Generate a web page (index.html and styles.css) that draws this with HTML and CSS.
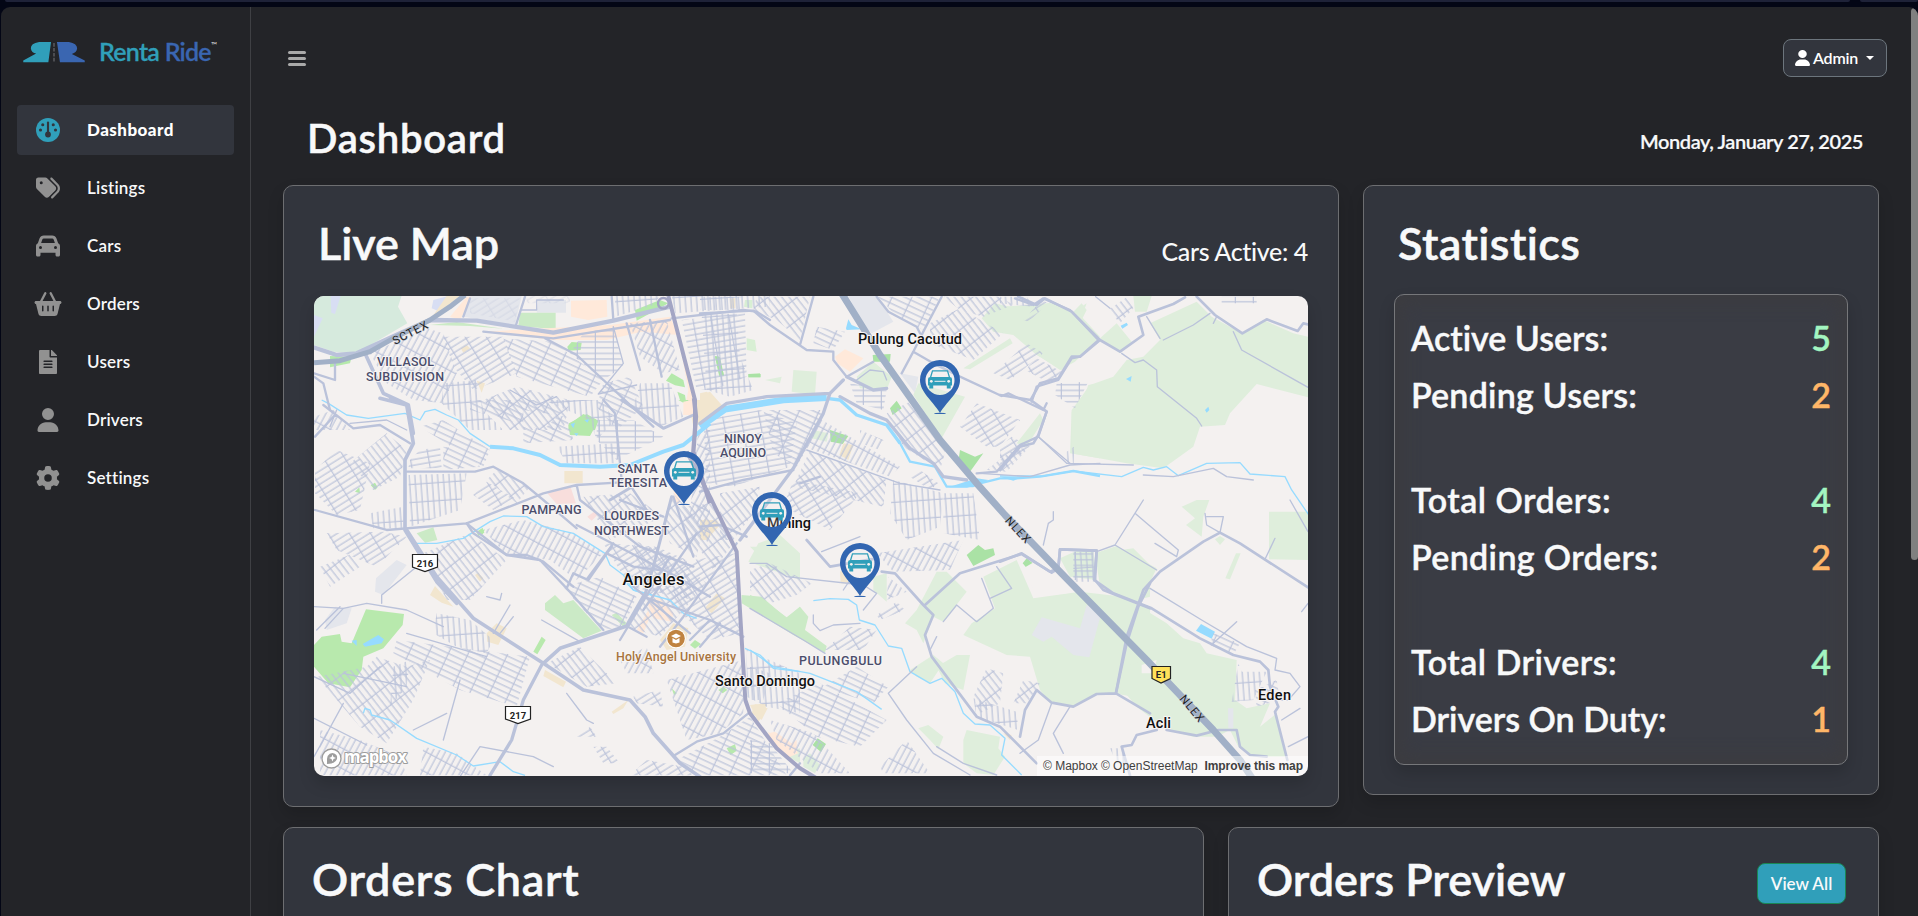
FILE: index.html
```html
<!DOCTYPE html>
<html lang="en">
<head>
<meta charset="utf-8">
<title>Renta Ride – Dashboard</title>
<link rel="stylesheet" href="styles.css">
</head>
<body>
<div class="browser-strip"><span class="strip-main"></span><span class="strip-side"></span></div>
<div class="app">
  <aside class="sidebar">
    <div class="brand">
      <svg class="brand-mark" viewBox="0 0 186 62"><path fill="#309fba" d="M84 0H48Q22 4 23 20Q25 33 39 35L0 56V61H76Z"/><path fill="#3a66b1" d="M102 0H138Q163 4 163 20Q161 33 147 36L186 56V61H111Z"/><path stroke="#55565a" stroke-width="5" stroke-dasharray="11 4" d="M93 3V60"/></svg>
      <div class="brand-name"><span class="renta">Renta</span> <span class="ride">Ride</span></div><span class="tm">™</span>
    </div>
    <nav class="nav">
      <a class="nav-item active"><svg class="ico" viewBox="0 0 512 512"><circle cx="256" cy="256" r="256"/><g fill="#32353d"><circle cx="256" cy="352" r="62"/><rect x="233" y="72" width="46" height="260" rx="23"/><circle cx="144" cy="144" r="33"/><circle cx="368" cy="144" r="33"/><circle cx="96" cy="256" r="33"/><circle cx="416" cy="256" r="33"/></g></svg><span>Dashboard</span></a>
      <a class="nav-item"><svg class="ico" viewBox="0 0 512 512"><path d="M345 39.1L472.8 168.4c52.4 53 52.4 138.2 0 191.2L360.8 472.9c-9.3 9.4-24.5 9.5-33.9 .2s-9.5-24.5-.2-33.9L438.6 325.9c33.9-34.3 33.9-89.4 0-123.7L310.9 72.9c-9.3-9.4-9.2-24.6 .2-33.9s24.6-9.2 33.9 .2zM0 229.5V80C0 53.5 21.5 32 48 32H197.5c17 0 33.3 6.7 45.3 18.7l168 168c25 25 25 65.5 0 90.5L277.3 442.7c-25 25-65.5 25-90.5 0l-168-168C6.7 262.7 0 246.5 0 229.5zM144 144a32 32 0 1 0 -64 0 32 32 0 1 0 64 0z"/></svg><span>Listings</span></a>
      <a class="nav-item"><svg class="ico" viewBox="0 0 512 512"><path d="M135.2 117.4L109.1 192H402.9l-26.1-74.6C372.3 104.6 360.2 96 346.6 96H165.4c-13.6 0-25.7 8.6-30.2 21.4zM39.6 196.8L74.8 96.3C88.3 57.8 124.6 32 165.4 32H346.6c40.8 0 77.1 25.8 90.6 64.3l35.2 100.5c23.2 9.6 39.6 32.5 39.6 59.2V400v48c0 17.7-14.3 32-32 32H448c-17.7 0-32-14.3-32-32V400H96v48c0 17.7-14.3 32-32 32H32c-17.7 0-32-14.3-32-32V400 256c0-26.7 16.4-49.6 39.6-59.2zM128 288a32 32 0 1 0 -64 0 32 32 0 1 0 64 0zm288 32a32 32 0 1 0 0-64 32 32 0 1 0 0 64z"/></svg><span>Cars</span></a>
      <a class="nav-item"><svg class="ico" viewBox="0 0 576 512"><path d="M253.3 35.1c6.1-11.8 1.5-26.3-10.2-32.4s-26.3-1.5-32.4 10.2L117.6 192H32c-17.7 0-32 14.3-32 32s14.3 32 32 32L83.9 463.5C91 492 116.6 512 146 512H430c29.4 0 55-20 62.1-48.5L544 256c17.7 0 32-14.3 32-32s-14.3-32-32-32H458.4L365.3 12.9C359.2 1.2 344.7-3.4 332.9 2.7s-16.3 20.6-10.2 32.4L404.3 192H171.7L253.3 35.1zM192 304v96c0 8.8-7.2 16-16 16s-16-7.2-16-16V304c0-8.8 7.2-16 16-16s16 7.2 16 16zm96-16c8.8 0 16 7.2 16 16v96c0 8.8-7.2 16-16 16s-16-7.2-16-16V304c0-8.8 7.2-16 16-16zm128 16v96c0 8.8-7.2 16-16 16s-16-7.2-16-16V304c0-8.8 7.2-16 16-16s16 7.2 16 16z"/></svg><span>Orders</span></a>
      <a class="nav-item"><svg class="ico" viewBox="0 0 384 512"><path d="M224 136V0H24C10.7 0 0 10.7 0 24v464c0 13.3 10.7 24 24 24h336c13.3 0 24-10.7 24-24V160H248c-13.2 0-24-10.8-24-24zm64 236c0 6.6-5.4 12-12 12H108c-6.6 0-12-5.4-12-12v-8c0-6.6 5.4-12 12-12h168c6.6 0 12 5.4 12 12v8zm0-64c0 6.6-5.4 12-12 12H108c-6.6 0-12-5.4-12-12v-8c0-6.6 5.4-12 12-12h168c6.6 0 12 5.4 12 12v8zm0-72v8c0 6.6-5.4 12-12 12H108c-6.6 0-12-5.4-12-12v-8c0-6.6 5.4-12 12-12h168c6.6 0 12 5.4 12 12zm96-114.1v6.1H256V0h6.1c6.4 0 12.5 2.5 17 7l97.9 98c4.5 4.5 7 10.6 7 16.9z"/></svg><span>Users</span></a>
      <a class="nav-item"><svg class="ico" viewBox="0 0 448 512"><path d="M224 256A128 128 0 1 0 224 0a128 128 0 1 0 0 256zm-45.7 48C79.8 304 0 383.8 0 482.3C0 498.7 13.3 512 29.7 512H418.3c16.4 0 29.7-13.3 29.7-29.7C448 383.8 368.2 304 269.7 304H178.3z"/></svg><span>Drivers</span></a>
      <a class="nav-item"><svg class="ico" viewBox="0 0 512 512"><path d="M495.9 166.6c3.2 8.7 .5 18.4-6.4 24.6l-43.3 39.4c1.1 8.3 1.7 16.8 1.7 25.4s-.6 17.1-1.7 25.4l43.3 39.4c6.9 6.2 9.6 15.9 6.4 24.6c-4.4 11.9-9.7 23.3-15.8 34.3l-4.7 8.1c-6.6 11-14 21.4-22.1 31.2c-5.9 7.2-15.7 9.6-24.5 6.8l-55.7-17.7c-13.4 10.3-28.2 18.9-44 25.4l-12.5 57.1c-2 9.1-9 16.3-18.2 17.8c-13.8 2.3-28 3.5-42.5 3.5s-28.7-1.2-42.5-3.5c-9.2-1.5-16.2-8.7-18.2-17.8l-12.5-57.1c-15.8-6.5-30.6-15.1-44-25.4L83.1 425.9c-8.8 2.8-18.6 .3-24.5-6.8c-8.1-9.8-15.5-20.2-22.1-31.2l-4.7-8.1c-6.1-11-11.4-22.4-15.8-34.3c-3.2-8.7-.5-18.4 6.4-24.6l43.3-39.4C64.6 273.1 64 264.6 64 256s.6-17.1 1.7-25.4L22.4 191.2c-6.9-6.2-9.6-15.9-6.4-24.6c4.4-11.9 9.7-23.3 15.8-34.3l4.7-8.1c6.6-11 14-21.4 22.1-31.2c5.9-7.2 15.7-9.6 24.5-6.8l55.7 17.7c13.4-10.3 28.2-18.9 44-25.4l12.5-57.1c2-9.1 9-16.3 18.2-17.8C227.3 1.2 241.5 0 256 0s28.7 1.2 42.5 3.5c9.2 1.5 16.2 8.7 18.2 17.8l12.5 57.1c15.8 6.5 30.6 15.1 44 25.4l55.7-17.7c8.8-2.8 18.6-.3 24.5 6.8c8.1 9.8 15.5 20.2 22.1 31.2l4.7 8.1c6.1 11 11.4 22.4 15.8 34.3zM256 336a80 80 0 1 0 0-160 80 80 0 1 0 0 160z"/></svg><span>Settings</span></a>
    </nav>
  </aside>

  <main class="main">
    <header class="topbar">
      <div class="burger"><i></i><i></i><i></i></div>
      <button class="admin"><svg class="admin-ico" viewBox="0 0 448 512" preserveAspectRatio="none"><path d="M224 256A128 128 0 1 0 224 0a128 128 0 1 0 0 256zm-45.7 48C79.8 304 0 383.8 0 482.3C0 498.7 13.3 512 29.7 512H418.3c16.4 0 29.7-13.3 29.7-29.7C448 383.8 368.2 304 269.7 304H178.3z"/></svg><span>Admin</span><i class="caret"></i></button>
    </header>
    <div class="heading"><h1>Dashboard</h1><div class="date">Monday, January 27, 2025</div></div>

    <div class="row">
      <section class="card map-card">
        <div class="card-head"><h2 class="t-map">Live Map</h2><span class="cars-active">Cars Active: 4</span></div>
        <div class="map">
<svg class="map-svg" viewBox="0 0 994 480">
<defs>
  <pattern id="g0" width="54" height="17" patternUnits="userSpaceOnUse"><path d="M0 8H54M4 0V17" stroke="#bcc3da" stroke-width="3.5" fill="none"/></pattern>
  <pattern id="g1" href="#g0" patternTransform="rotate(25)"/>
  <pattern id="g2" href="#g0" patternTransform="rotate(52)"/>
  <pattern id="g3" href="#g0" patternTransform="rotate(86)"/>
  <pattern id="g4" href="#g0" patternTransform="rotate(118)"/>
  <pattern id="g5" href="#g0" patternTransform="rotate(148)"/>
  <pattern id="g6" href="#g0" patternTransform="rotate(170)"/>
  <g id="pin"><ellipse cx="20" cy="53.4" rx="6" ry=".7" fill="#3266b1"/><circle cx="20" cy="20" r="15" fill="#f4f1f0" opacity=".2"/><path fill-rule="evenodd" fill="#3266b1" d="M20 0A20 20 0 0 1 40 20C40 32 28 40 20 53C12 40 0 32 0 20A20 20 0 0 1 20 0ZM20 6A14.5 14.5 0 1 0 20 35A14.5 14.5 0 1 0 20 6Z"/><path fill="none" stroke="#309fba" stroke-width="1.3" d="M10.5 17.5L12.5 10.8H27.5L29.500 17.500"/><path fill="#309fba" d="M8 19Q8 17 10.500 17H29.500Q32 17 32 19V25.500H30.700V28.500H26.800V25.500H13.200V28.500H9.300V25.500H8Z"/><path stroke="#f4f1f0" stroke-width="1" d="M14.500 21.300H25.500"/><circle cx="11.300" cy="21.300" r="1.400" fill="#f4f1f0"/><circle cx="28.700" cy="21.300" r="1.400" fill="#f4f1f0"/></g>
</defs>
<rect width="994" height="480" fill="#f4f1f0"/>

<!-- Land use -->
<g transform="translate(-44 -206) scale(.33333)">
  <path fill="#d6eadd" d="M132 617H395L384 650L412 700L260 790L190 785L132 765Z"/>
  <path fill="#d8def3" d="M182 618H212L195 672L184 668ZM132 675L158 685L132 740ZM490 630L535 618L530 650L510 665L485 655Z"/>
  <path fill="#f2e6cf" d="M530 618H570L480 690ZM1290 915L1320 905L1360 950L1290 990ZM572 775L590 765L600 775L580 788ZM620 872L645 880L635 908ZM1380 625H1396V655H1380Z"/>
  <path fill="#e4e6ec" d="M600 618H755L735 705L580 680ZM805 630H888V668H800Z"/>
  <path fill="#cbeac6" d="M750 668H857V718L745 708ZM480 705L560 696L700 716L600 708Z"/>
  <path fill="#ffe9da" d="M903 632L1010 630L1012 680L955 690L903 680ZM540 680L590 620H605L570 690ZM1020 705L1200 680L1225 735L1115 725L1010 750L850 750L640 725ZM1225 740L1270 900L1275 975H1240L1255 900Z"/>
  <path fill="#b5e9ab" d="M1095 660L1170 630L1195 640L1100 692ZM892 770L905 756L935 758L932 780L895 782ZM1335 800L1345 798L1362 855L1348 860ZM1188 872L1205 850L1240 870L1245 892L1215 886ZM1222 905L1245 915L1248 935L1230 930ZM180 798L245 800L240 820L180 832ZM1436 852L1470 850V862H1436ZM897 1000L950 972L985 992L975 1020H895Z"/>
  <path fill="#d8efd4" d="M1430 745L1455 750L1460 785L1430 780ZM1425 630H1447V655L1422 650Z"/>
</g>
<g transform="translate(386 -16) scale(.33333)">
  <path fill="#e4e6ec" d="M445 48H530L580 125L515 160L490 135ZM600 280L655 290L645 340Z"/>
  <path fill="#dfeedc" d="M845 115L885 70L945 85L1000 90L1060 70L1120 95L1145 70L1160 90L1130 150L1165 165L1085 270L1010 225L940 165L880 155ZM790 265L930 175L938 190L810 268ZM655 310L795 350L725 475L640 345ZM1165 315L1200 310V535L1110 520L1115 395L1140 380ZM470 290L520 245L575 290L560 330L480 325ZM280 270L350 275L345 345L275 335ZM195 300L245 290L240 310ZM340 450L385 460L380 485L335 475ZM950 490L1020 400L1030 420L980 500Z"/>
  <path fill="#aae2a5" d="M780 510L825 530L850 520L810 575L775 545ZM390 450L445 468L428 492L392 485ZM570 385L590 362L605 385L578 405ZM45 228L60 232L72 288L58 285ZM145 282H182V292H145ZM518 225L572 222L570 245L520 245Z"/>
  <path fill="#ffe9da" d="M405 230L435 208L490 235L450 275L412 250Z"/>
  <path fill="#f2e6cf" d="M0 340L20 335L70 380L5 425ZM430 490L460 495L445 540L418 525ZM0 720L50 720L60 735L20 780H0Z"/>
  <path fill="#96dbff" d="M438 145L445 118L455 135L485 148L440 150Z"/>
</g>
<g transform="translate(686 -116) scale(.33333)">
  <path fill="#dfeedc" d="M0 380L100 375L150 368L215 400L260 370L245 410L300 470L225 545L180 570L105 520L95 490L45 460L0 450ZM300 475L350 430L395 485L360 520ZM400 348H455L440 395H405ZM450 430L590 365L635 410L725 460L790 420L880 460L924 470V652L770 612L690 700L675 735L600 740L580 800L490 865L380 850L215 820L215 690L270 615L340 590L380 540L430 530L480 480Z"/>
  <path fill="#96dbff" d="M362 437L380 428L384 435L367 446ZM378 597L395 588L392 605ZM615 690L625 680L628 690L620 698Z"/>
</g>
<g transform="translate(-14 204) scale(.33333)">
  <path fill="#b8e9ad" d="M198 328L312 342L308 375L250 445L190 470L185 510L150 562L85 550L42 500V435L65 410L120 402L125 425L155 430ZM700 455L725 410L737 420L712 463ZM1170 435L1185 420L1203 432L1185 446ZM1280 745L1305 733L1310 752L1292 765ZM535 95L555 88L545 108ZM1115 565L1130 580L1122 585ZM1255 570L1270 560L1282 570L1268 580Z"/>
  <path fill="#cbeac6" d="M735 310L765 285L790 310L820 300L905 392L850 415L735 330ZM935 345L950 338L980 370L970 380ZM1325 285L1385 290L1460 355L1500 320V415L1325 310ZM350 100L400 82L412 120L375 128Z"/>
  <path fill="#dfeedc" d="M1375 130L1440 105L1500 160V240L1345 185ZM1440 760L1500 745V790Z"/>
  <path fill="#e4e6ec" d="M228 235L290 180L320 195L250 285L225 275ZM75 360L105 320L155 325L140 370L80 390Z"/>
  <path fill="#f2e6cf" d="M390 285L405 258L460 320L425 308ZM560 400L590 370L620 385L595 435L562 425ZM735 510L798 545L790 562L730 528ZM935 635L985 600L970 625L940 642ZM1195 85L1215 55L1245 85L1215 118ZM1215 325L1250 280L1275 295L1235 340ZM1080 420L1120 370L1165 385L1155 440L1100 450ZM1355 640L1365 612L1403 625L1385 660Z"/>
  <path fill="#ffe9da" d="M1040 305L1075 290L1120 340L1115 365L1060 355ZM1010 390L1045 330L1050 350L1030 400ZM1405 700L1425 695L1475 730L1490 720V760L1450 765Z"/>
  <path fill="#96dbff" d="M155 422L170 420L170 438ZM188 432L235 405L252 418L245 430L195 440Z"/>
</g>
<g transform="translate(436 244) scale(.33333)">
  <path fill="#cbeac6" d="M0 165L40 180L110 232L150 200L175 230L165 270L230 318L225 338L130 285L0 205Z"/>
  <path fill="#dfeedc" d="M640 285L665 250L735 205L700 110L800 60L850 175L990 155L1120 170L1200 200V500L1150 470L1090 460L1040 465L970 500L900 490L870 450L840 350L770 345ZM465 250L500 210L560 95L590 95L650 155L580 245L550 230L520 310L500 270ZM480 390L550 345L580 370L540 430L500 410ZM560 380L620 345L660 345L640 450L585 430ZM640 600L650 570L750 590L745 625L765 650L730 705L680 700L640 670ZM505 565L535 555L580 590L565 628L540 600ZM160 655L180 640L210 675L195 700L160 680ZM0 20L60 20L110 90L60 80ZM370 110L410 100L410 185L370 150ZM985 30H1030L1040 120L960 110L930 55ZM1045 40L1150 25L1200 75V170L1140 185L1050 145Z"/>
  <path fill="#e4e6ec" d="M845 285L875 232L990 265L1010 195L1055 215L1018 352L970 345L905 290L880 305Z"/>
  <path fill="#aae2a5" d="M650 45L685 15L705 30L730 25L735 45L670 78ZM818 70L830 55L855 75L835 90ZM188 615L203 595L228 612L213 636Z"/>
  <path fill="#f2e6cf" d="M270 95L290 85L300 130L272 130ZM0 495L50 490L45 515L25 545ZM760 580L785 585L780 600Z"/>
  <path fill="#ffe9da" d="M55 575L80 595L125 610L145 640L110 655L60 600Z"/>
</g>
<g transform="translate(686 204) scale(.33333)">
  <path fill="#dfeedc" d="M807 35H924V180L807 178ZM545 20L590 0H628L610 50L605 110L558 75L585 55ZM676 235L708 160L722 160L690 238ZM285 160L350 138L470 205L420 310L300 260ZM420 320L500 370L550 415L600 430L620 460L710 480L705 600L740 625L810 610L780 680L830 640L860 770L760 770L715 740L690 690L650 710H580L500 690L410 620L360 560L360 505L440 480L380 430ZM645 118L660 108L675 118L660 135Z"/>
  <path fill="#f4f1f0" d="M70 205L130 170L150 215L200 280L110 290ZM425 495L470 480L460 520L425 520Z"/>
  <path fill="#96dbff" d="M588 392L603 372L645 395L635 416Z"/>
  <path fill="#e4e6ec" d="M684 625H700V685H685Z"/>
</g>
<g transform="translate(-4 104) scale(.33333)">
  <path fill="#b5e9ab" d="M775 75L820 42L865 62L840 108L780 105ZM500 395L518 383L523 398L505 408ZM135 275L148 262L150 280ZM182 255L195 248L203 262L195 270ZM1105 0H1140L1120 8Z"/>
  <path fill="#96dbff" d="M782 72L795 68L790 85ZM823 60L838 58L832 68ZM792 100L805 100L800 108Z"/>
  <path fill="#f8dedc" d="M712 280L782 262L798 310L740 312ZM832 350L855 333L862 345L845 362Z"/>
  <path fill="#f2e6cf" d="M763 213H818V250H763ZM1135 0H1200V60L1150 80ZM495 525L505 518L520 535L510 545Z"/>
  <path fill="#ffe9da" d="M1120 5L1150 0V45H1120ZM1090 270L1120 280L1100 320Z"/>
</g>

<!-- Residential street grids -->
<g transform="translate(-44 -206) scale(.33333)">
  <path fill="url(#g4)" d="M300 790L470 715L520 730L560 850L520 940L430 930L350 880Z"/>
  <path fill="url(#g5)" d="M520 740L700 740L740 850L610 900L550 830Z"/>
  <path fill="url(#g1)" d="M700 745L850 755L1000 870L960 920L740 860Z"/>
  <path fill="url(#g3)" d="M520 880L620 870L640 960L700 1020H600L515 940Z"/>
  <path fill="url(#g2)" d="M640 930L740 890L900 930L880 1020H720Z"/>
  <path fill="url(#g0)" d="M940 730L1030 710L1060 830L1000 870L900 790Z"/>
  <path fill="url(#g1)" d="M1000 880L1080 860L1120 950L1040 1020L980 950Z"/>
  <path fill="url(#g4)" d="M1080 700L1190 690L1230 840L1180 850L1110 800Z"/>
  <path fill="url(#g3)" d="M1110 880L1200 880L1240 980L1170 1010L1090 950Z"/>
  <path fill="url(#g6)" d="M1235 690L1425 670L1430 860L1330 900L1280 900Z"/>
  <path fill="url(#g3)" d="M1205 618L1500 618V650L1430 655L1215 670ZM1035 618L1170 618L1150 645L1035 680Z"/>
  <path fill="url(#g4)" d="M132 980L190 960L240 1020H132Z"/>
  <path fill="url(#g5)" d="M770 618H900V640H770ZM600 625L750 625L735 695L600 670Z" opacity=".35"/>
</g>
<g transform="translate(386 -16) scale(.33333)">
  <path fill="url(#g3)" d="M0 50H130L120 90H0ZM5 105L110 100L120 230L160 330L90 350L20 330Z"/>
  <path fill="url(#g2)" d="M170 50H330L300 180L230 120L160 90Z"/>
  <path fill="url(#g1)" d="M350 140L435 155L400 210L340 190ZM535 50L720 50L670 150L590 110Z"/>
  <path fill="url(#g2)" d="M730 50L900 50L940 75L850 110L780 90ZM690 130L780 85L910 160L820 240L690 190Z"/>
  <path fill="url(#g5)" d="M880 280L980 190L1030 220L930 300ZM975 270L1010 235L1085 275L1050 310Z"/>
  <path fill="url(#g0)" d="M450 310L560 330L550 390L470 370ZM1070 310L1165 305L1125 385L1065 345Z"/>
  <path fill="url(#g2)" d="M560 400L640 360L740 500L720 570L610 500Z"/>
  <path fill="url(#g5)" d="M780 440L830 370L960 420L900 500L860 500Z"/>
  <path fill="url(#g6)" d="M10 420L180 390L290 430L270 560L100 620L20 610Z"/>
  <path fill="url(#g1)" d="M190 390L370 390L340 470L290 560L220 520Z"/>
  <path fill="url(#g4)" d="M350 410L600 560L570 590L310 500ZM480 450L550 480L540 510L480 490Z"/>
  <path fill="url(#g2)" d="M330 510L560 600L550 680L280 620Z"/>
  <path fill="url(#g3)" d="M580 600L730 640L720 740L620 780L570 700ZM730 640L820 640L840 780L730 760Z"/>
  <path fill="url(#g5)" d="M280 600L480 640L390 750L250 680ZM630 590L660 570L715 610L690 630Z"/>
  <path fill="url(#g2)" d="M860 570L950 500L980 510L920 575ZM60 640L180 620L160 700L100 780H60Z"/>
</g>
<g transform="translate(686 -116) scale(.33333)">
  <path fill="url(#g2)" d="M325 390L380 352L400 385L360 430Z"/><path fill="url(#g0)" d="M665 350H770V370H665Z"/>
  <path fill="url(#g5)" d="M70 420L125 360L145 370L85 425ZM35 770L90 800L0 880V800Z"/>
  <path fill="url(#g3)" d="M0 350L80 350L100 380L0 370ZM200 815L222 800V850H200Z"/>
</g>
<g transform="translate(-4 104) scale(.33333)">
  <path fill="url(#g5)" d="M15 210L80 150L180 190L150 330L80 345L15 280Z"/>
  <path fill="url(#g2)" d="M120 190L230 100L290 150L270 230L190 270Z"/>
  <path fill="url(#g3)" d="M295 225L470 220L450 330L300 380ZM180 340L280 320V385H190Z"/>
  <path fill="url(#g6)" d="M300 180L330 150L390 140L395 205H295Z"/>
  <path fill="url(#g1)" d="M400 140L470 150L510 200L400 210ZM330 80L400 60L540 150L520 200L440 150Z"/>
  <path fill="url(#g5)" d="M490 285L530 245L615 295L550 330Z"/><path fill="url(#g2)" d="M560 210L660 260L620 310L530 240Z"/>
  <path fill="url(#g5)" d="M50 400L220 395L290 410L200 500L80 450Z"/>
  <path fill="url(#g2)" d="M30 500L130 460L150 500L60 560Z"/>
  <path fill="url(#g2)" d="M340 460L480 400L590 480L480 600H410Z"/>
  <path fill="url(#g4)" d="M520 390L640 360L790 400L880 460L800 540L720 480L590 465Z"/>
  <path fill="url(#g1)" d="M480 30L700 90L760 30L690 0H480ZM640 30L770 50L790 120L640 130Z"/>
  <path fill="url(#g3)" d="M740 140L915 130L915 190L770 190ZM700 0L870 0L915 60L860 120L840 60Z"/>
  <path fill="url(#g0)" d="M860 60L970 60L1060 110L920 180L860 120Z"/>
  <path fill="url(#g2)" d="M1090 280L1180 380L1160 470L1080 430L1060 360ZM820 290L960 280L1060 350L900 420Z"/>
  <path fill="url(#g5)" d="M880 430L1040 440L1130 480L1150 600L960 560Z"/>
  <path fill="url(#g4)" d="M1165 90L1200 90V440L1140 340Z"/>
</g>
<g transform="translate(-14 204) scale(.33333)">
  <path fill="url(#g1)" d="M290 420L690 470L650 620L480 570L280 460Z"/>
  <path fill="url(#g2)" d="M50 530L200 500L230 470L320 500L390 480L340 600L260 730L180 680Z"/>
  <path fill="url(#g3)" d="M410 340L510 360L580 420L560 460L470 440L400 400ZM280 500L330 480L320 560L270 620Z"/>
  <path fill="url(#g4)" d="M60 690L180 720L300 770L320 826H60ZM370 740L470 760L560 826H360Z"/>
  <path fill="url(#g2)" d="M740 490L840 440L950 550L860 560Z"/>
  <path fill="url(#g5)" d="M1000 590L1080 570L1090 620L1010 610ZM830 710L870 680L890 710ZM880 740L920 740L960 790H910ZM990 826L1040 780L1150 800L1180 826Z"/>
  <path fill="url(#g1)" d="M790 260L900 230L1010 290L970 380L910 390L850 330Z"/>
  <path fill="url(#g2)" d="M1000 120L1140 180L1220 250L1080 410L980 380L1030 290Z"/>
  <path fill="url(#g5)" d="M1180 180L1310 160L1325 400L1230 420L1100 300Z"/>
  <path fill="url(#g4)" d="M960 480L1040 440L1060 520L980 520ZM1100 540L1330 480L1330 640L1260 700L1160 720Z"/>
  <path fill="url(#g1)" d="M1130 780L1260 710L1350 650L1460 826H1200Z"/>
  <path fill="url(#g3)" d="M1340 450L1500 520V640L1400 620L1340 590Z"/>
  <path fill="url(#g2)" d="M1140 20L1240 10L1300 130L1240 210L1180 120Z"/>
</g>
<g transform="translate(436 244) scale(.33333)">
  <path fill="url(#g2)" d="M0 90L60 70L185 130L140 165L60 190L0 150Z"/>
  <path fill="url(#g4)" d="M380 40L640 0L600 90L430 95ZM415 110L470 155L410 180Z"/>
  <path fill="url(#g5)" d="M380 225L440 185L465 210L390 240ZM225 330L300 260L380 270L340 330Z"/>
  <path fill="url(#g1)" d="M220 440L320 380L415 440L370 490L240 450ZM80 490L210 430L410 540L330 620L200 590Z"/>
  <path fill="url(#g4)" d="M60 540L190 580L300 700H210L80 600ZM390 680L470 600L540 700H400Z"/>
  <path fill="url(#g2)" d="M670 470L710 385L760 400L750 490L690 520ZM790 490L820 420L870 430L830 490Z"/>
  <path fill="url(#g3)" d="M670 475L800 515L805 570L680 530ZM0 380L60 400L40 480L0 480Z"/>
  <path fill="url(#g0)" d="M970 35H1030V120H970ZM0 600L60 610L130 700H0Z"/>
</g>
<g transform="translate(686 204) scale(.33333)">
  <path fill="url(#g3)" d="M220 155H285V245H220ZM330 745H365L385 790H350ZM725 515L800 515L760 600L695 605L715 490Z"/>
  <path fill="url(#g1)" d="M765 570L830 540L840 600L770 620ZM640 400L720 430L700 465L630 435Z"/>
</g>

<!-- Water -->
<g fill="none" stroke="#96dbff" stroke-linejoin="round">
<g transform="translate(-4 104) scale(.33333)"><path stroke-width="4" d="M35 0L55 10L110 45L175 55L285 40L330 60L345 35L375 28L410 45L445 60L480 100L540 140"/><path stroke-width="12" d="M540 140L610 145L690 165L750 195L870 200L960 195L1060 155L1120 135L1200 70"/><path stroke-width="4" d="M310 430H380L460 415L540 365L580 348L650 350L700 380L790 400L885 460L900 495L940 525L970 570L1000 580"/></g>
<g transform="translate(386 -16) scale(.33333)"><path stroke-width="20" d="M0 440L75 388L250 360L380 353"/><path stroke-width="10" d="M380 355L420 360L470 405L560 435L600 490"/><path stroke-width="7" d="M595 480L630 545L705 560L740 620L800 620L900 595L950 595L1020 590L1120 573L1200 588"/><path fill="#96dbff" stroke="none" d="M745 622L830 595L865 600L820 622ZM900 590L965 592L940 602Z"/></g>
<g transform="translate(686 -116) scale(.33333)"><path stroke-width="4" d="M0 888H130L220 873L365 890L430 862L460 870L500 860L535 887L620 850L720 848L750 882L855 890L875 930L930 1010"/></g>
<g transform="translate(-14 204) scale(.33333)"><path stroke-width="4" d="M980 250L1000 270L1110 300L1150 340L1190 355M1335 445L1380 465L1420 505L1500 515M190 640L195 625L210 630L215 645L270 660L350 715L470 765L520 798L600 785L640 815L675 826"/></g>
<g transform="translate(436 244) scale(.33333)"><path stroke-width="4" d="M190 182L240 176L295 178L320 195L328 240L375 255L415 318L455 325L480 395L540 430L575 415L615 455L640 520L675 552L720 555L765 595L755 645L815 705M0 330L70 380L180 400L320 455L395 508"/></g>
</g>

<!-- Secondary roads -->
<g fill="none" stroke="#bac2da" stroke-linejoin="round" stroke-linecap="round">
<g transform="translate(-44 -206) scale(.33333)"><path stroke-width="13" d="M125 770L200 795L260 790L390 730L480 690L620 692L850 728L1030 692L1200 650"/><path stroke-width="7" d="M640 725L850 745L1200 690M765 620L738 705M825 745L920 795L1150 1010M1025 618L1030 690M1140 690L1175 860M1070 700L1110 840M1205 685L1420 660L1460 665L1500 690M600 625L580 680M132 860L160 880L180 960M132 850L195 870V820"/><path stroke-width="11" d="M285 790L340 910L415 945L430 1030"/><path stroke-width="4" d="M800 630H880M755 660H800V630M200 960L180 1010M240 1000L350 990L410 1020M720 900L800 945L860 920M985 912L1060 820L1030 710M1100 885L985 912"/></g>
<g transform="translate(386 -16) scale(.33333)"><path stroke-width="7" d="M0 100L160 92L210 135L320 210L400 215M340 50L300 195M400 215V240L440 290L520 245M530 50L565 95L650 140L660 160M725 50L670 155L640 215L605 280M640 215L700 250L780 290L905 348L925 340L1030 390L1040 370M945 55L1000 75L1030 55L1110 90L1195 180L1140 230L1115 235L1075 300L1010 320L995 365M1040 395L1015 470L960 495L890 575L830 580"/><path stroke-width="10" d="M0 430L80 370L200 350L390 340L430 300M440 290L520 330L560 325M420 350L510 400L560 420L630 505L700 550L730 590L800 600M390 340L370 400L280 565L120 780"/><path stroke-width="7" d="M280 570L130 600L0 635M300 610L360 590M0 740L60 735L140 770"/><path stroke-width="4" d="M320 510L600 610L720 630M840 580L990 590L1110 555L1200 550M1015 470L1110 550M470 300L510 270L550 275L560 300"/></g>
<g transform="translate(686 -116) scale(.33333)"><path stroke-width="8" d="M55 350L110 375L135 355L215 395L300 480L360 515L430 465L415 410L520 372L555 352M590 350L645 405L727 460L800 418L893 453L910 430L924 433M300 480L240 530L215 530L175 595L120 610L92 660L0 645M92 660L140 695L115 765L100 790L60 800L0 870"/><path stroke-width="4" d="M287 350L330 385M365 520L405 548L430 540L470 570L472 620L590 715L605 738M440 410L480 475M700 455L725 510L924 622M115 770L200 850L400 855M430 885L520 890L640 865L680 890L760 900M490 480L580 435L630 400M650 410L640 430"/></g>
<g transform="translate(-4 104) scale(.33333)"><path stroke-width="11" d="M210 -5L290 15L310 130L285 180V390L380 545L440 610"/><path stroke-width="7" d="M15 330L230 390L470 370L700 280L800 255L920 248M290 215H495L550 200L640 250L700 300L800 385M240 -5L285 10M40 15L130 85L210 75L300 130M15 110L75 45M880 0L915 40L935 240M470 370L490 400L590 465H650L700 485L790 560M800 255L810 300L990 440L1150 500M1090 290L1150 470M905 440L835 540M930 300L1060 350M960 255L1010 330M800 375L1100 530L1200 590"/><path stroke-width="9" d="M1085 290L1030 500L1000 600M935 0L1060 85L1150 45M1000 240L900 300"/></g>
<g transform="translate(-14 204) scale(.33333)"><path stroke-width="11" d="M320 90L410 230L520 355L730 490L850 570L990 600L1035 650L1060 700L1140 790L1200 830M730 490L780 445L980 378L1030 290"/><path stroke-width="10" d="M725 495L670 600L635 720L570 826"/><path stroke-width="7" d="M500 70L620 165L720 180L800 265L910 390M800 265L820 220L860 238L940 130M1030 290L1230 360L1330 410M980 378L1040 410M1000 260L1170 400M1110 170L960 420M1190 100L1030 330M1310 130L1150 350L1080 440M1230 360L1170 420M1260 370L1200 440M920 160L1000 200L1080 210M1125 765L1190 725L1270 700L1345 640M1470 826L1500 790"/><path stroke-width="4" d="M42 320L130 325L200 310L320 330L430 380M245 310V285L350 200M75 385L130 325M42 530L150 580L240 500M42 655L200 735M320 400L560 470M480 540L430 720M320 560L130 520M42 770L70 720L130 610M440 640L340 690M50 390L120 320M480 830L540 740L700 770L760 800M800 580L860 660L880 670M640 350L600 400M725 360L840 425M580 400L630 315M560 290L600 300L605 280"/></g>
<g transform="translate(436 244) scale(.33333)"><path stroke-width="8" d="M170 0L240 80L380 55M395 95L435 100L520 195L550 225L525 285L545 350L680 530L750 560L860 670M525 195L630 100L815 42L905 98L925 85L930 28L1040 32L1035 120L1060 150L1200 205M1200 130L1165 200L1130 310L1098 460L1040 462L970 500L905 488L860 450L825 510L810 590M1098 460L1200 520"/><path stroke-width="4" d="M0 70H50L110 110L340 135L380 160L340 210M215 35L330 -10M580 245L620 195L680 245L730 205L695 115M740 80L785 145L720 175M190 225V250L210 272L250 255L330 250M0 205L160 300L225 340M540 330L560 290M415 460L470 540L550 640L660 705M415 460L500 380M560 620L640 670L740 705M905 490L865 600L810 640M960 500L910 580L940 640M300 120L280 150"/></g>
<g transform="translate(686 204) scale(.33333)"><path stroke-width="8" d="M0 185L65 160L150 215L175 205L180 148L290 152L283 240L340 280L455 325L600 415L700 465L780 485L805 510L810 560L835 620L825 635L862 780M415 312L430 270L480 215L610 125L660 98L720 130L924 262M415 312L380 410L348 578M500 690L590 707L655 690H710L720 740L750 765L800 770M470 690L410 705L395 735L365 740L390 826"/><path stroke-width="4" d="M430 0L345 135L290 155M345 135L470 210M405 40L440 70L535 150L530 170L465 130M130 135L145 70L160 60V35M615 40L620 75L660 98L670 50L620 50M450 265L605 360L740 440L830 475L825 510L870 520L900 560L865 600L840 600M795 178L825 115M870 0L924 95M640 430L710 365M865 740L924 710M845 660L900 625M924 310L905 335"/></g>
</g>

<!-- Trunk roads -->
<g fill="none" stroke-linejoin="round">
<g transform="translate(-44 -206) scale(.33333)"><path stroke="#a1b0c7" stroke-width="15" d="M132 818L210 812L300 785L370 745L480 690L540 650L585 615"/><path stroke="#a3a5c4" stroke-width="12" d="M1195 618L1275 930V1020"/><circle cx="1180" cy="640" r="16" stroke="#a3a5c4" stroke-width="7"/></g>
<g transform="translate(-4 104) scale(.33333)"><path stroke="#a3a5c4" stroke-width="13" d="M1152 -5L1158 50L1150 155L1200 310"/></g>
<g transform="translate(-14 204) scale(.33333)"><path stroke="#a3a5c4" stroke-width="12" d="M1160 -145L1235 0L1310 155L1318 300L1336 600L1350 640L1430 745L1500 805L1550 835"/></g>
<g transform="translate(386 -16) scale(.33333)"><path stroke="#a1b0c7" stroke-width="21" d="M425 40L540 225L720 480L830 610L915 705L1100 896L1340 1140L1540 1350L1620 1440L1660 1500"/></g>
</g>

<!-- Labels -->
<g class="suburb" transform="translate(0 -.6)">
<text x="63" y="71" textLength="57">VILLASOL</text><text x="52" y="85.500" textLength="78">SUBDIVISION</text>
<text x="410" y="147.500" textLength="38">NINOY</text><text x="406" y="162" textLength="46">AQUINO</text>
<text x="303.500" y="177.500" textLength="40">SANTA</text><text x="295" y="192" textLength="58">TERESITA</text>
<text x="207.500" y="219" textLength="60">PAMPANG</text>
<text x="290" y="225" textLength="55">LOURDES</text><text x="280" y="240" textLength="75">NORTHWEST</text>
<text x="485" y="369.500" textLength="83">PULUNGBULU</text></g>
<g class="town" transform="translate(0 -.8)">
<text x="544" y="48.500" textLength="104">Pulung Cacutud</text><text x="453" y="232.500" textLength="44">Mining</text>
<text class="city" x="308.500" y="290" textLength="62">Angeles</text><text x="401" y="391" textLength="100">Santo Domingo</text>
<text x="944" y="404.500" textLength="33">Eden</text><text x="832" y="433" textLength="25">Acli</text></g>
<text class="poi" x="302" y="364.700" textLength="120">Holy Angel University</text>
<circle cx="362" cy="342.500" r="9.800" fill="#fff"/><circle cx="362" cy="342.500" r="8.800" fill="#c08340"/><path fill="#fff" d="M357 340L362 337.500L367 340L362 342.500ZM358.500 342L362 344L365.500 342V346.500L362 347.500L358.500 346.500Z"/>
<g class="road-name"><text transform="translate(81 49) rotate(-27)" textLength="38">SCTEX</text><text transform="translate(690.500 225) rotate(47)" textLength="31">NLEX</text><text transform="translate(865 403) rotate(50)" textLength="31">NLEX</text></g>
<g class="shield"><path d="M98.500 258.500H123.500V271L111 275.500L98.500 271Z"/><text x="111" y="271" text-anchor="middle">216</text><path d="M191.500 410.500H216.500V423L204 427.500L191.500 423Z"/><text x="204" y="423" text-anchor="middle">217</text><path fill="#ffe15a" d="M838 370.500H856.500V382.500L847 387L838 382.500Z"/><text x="847.200" y="382" text-anchor="middle">E1</text></g>

<use href="#pin" x="350" y="155"/><use href="#pin" x="438" y="196"/><use href="#pin" x="526" y="247"/><use href="#pin" x="606" y="64"/>

<g><circle cx="17.500" cy="462.500" r="9.500" fill="#fff" stroke="#9d9d9d" stroke-width="1.300"/><path fill="#9d9d9d" d="M13 468Q12 457 18.500 457Q24 458 23 463Q21 468 13 468Z"/><path fill="#fff" d="M18.500 458.500L19.500 461L22 462L19.500 463L18.500 465.500L17.500 463L15 462L17.500 461Z"/><text class="mapbox" x="30" y="467" textLength="63">mapbox</text></g>
</svg>
          <div class="attrib"><span>© Mapbox</span> <span>© OpenStreetMap</span> <b>Improve this map</b></div>
        </div>
      </section>

      <section class="card stats-card">
        <h2 class="t-stats">Statistics</h2>
        <div class="stats">
          <div class="group"><div class="stat"><span class="s1">Active Users:</span><b class="green">5</b></div><div class="stat"><span class="s2">Pending Users:</span><b class="orange">2</b></div></div>
          <div class="group"><div class="stat"><span class="s3">Total Orders:</span><b class="green">4</b></div><div class="stat"><span class="s4">Pending Orders:</span><b class="orange">2</b></div></div>
          <div class="group"><div class="stat"><span class="s3">Total Drivers:</span><b class="green">4</b></div><div class="stat"><span class="s1">Drivers On Duty:</span><b class="orange">1</b></div></div>
        </div>
      </section>
    </div>

    <div class="row row-orders">
      <section class="card chart-card"><h2 class="t-chart">Orders Chart</h2></section>
      <section class="card preview-card"><h2 class="t-prev">Orders Preview</h2><button class="view-all">View All</button></section>
    </div>
  </main>
  <div class="scrollbar"></div>
</div>
</body>
</html>
```

FILE: styles.css
```css
* { box-sizing: border-box; }
html, body { margin: 0; height: 916px; overflow: hidden; }
body { background: #030615; font-family: Lato, "Noto Sans", sans-serif; font-variant-ligatures: none; color: #f8f9fa; display: flex; flex-direction: column; }
h1, h2 { margin: 0; font-weight: 600; -webkit-text-stroke: .5px #f8f9fa; }

.browser-strip { height: 7px; flex: none; display: flex; gap: 10px; padding-left: 5px; }
.strip-main { width: 1845px; height: 2px; background: #1e2238; border-radius: 0 0 6px 6px; }
.strip-side { flex: 1; height: 2px; background: #1e2238; border-radius: 0 0 6px 6px; }

.app { flex: 1; min-height: 0; margin-left: 1px; background: #232428; border-radius: 9px 9px 0 0; display: flex; overflow: hidden; }
.sidebar { width: 250px; flex: none; border-right: 1px solid #3f4044; }
.brand { height: 98px; padding: 35px 0 0 22px; display: flex; align-items: flex-start; }
.brand-mark { width: 62px; height: 20.500px; margin-right: 14px; }
.brand-name { font-size: 25px; line-height: 30px; margin-top: -6px; font-weight: 600; white-space: nowrap; letter-spacing: -0.75px; -webkit-text-stroke: .3px; }
.renta { color: #309fba; }
.ride { color: #3a66b1; }
.tm { font-size: 8px; line-height: 8px; margin-top: -1px; color: #ddd; }

.nav { padding: 0 16px; display: flex; flex-direction: column; gap: 8px; }
.nav-item { height: 50px; border-radius: 4px; display: flex; align-items: center; font-size: 17px; font-weight: 600; letter-spacing: .2px; color: #f8f9fa; }
.nav-item span { margin-top: -2px; }
.nav-item.active { background: #32353d; font-weight: 900; letter-spacing: .45px; color: #fff; }
.ico { width: 28px; height: 24px; margin: 0 25px 0 17px; fill: #919191; }
.active .ico { fill: #309fba; }

.main { flex: 1; min-width: 0; padding: 0 32px 0 32px; }
.topbar { height: 102px; padding: 32px 0 0 5px; margin-right: -8px; display: flex; justify-content: space-between; align-items: flex-start; }
.burger { width: 18px; display: flex; flex-direction: column; gap: 3px; margin-top: 12px; }
.burger i { height: 3px; border-radius: 1.500px; background: #a9a9a9; }
.admin { width: 104px; height: 38px; border: 1px solid #6c757d; border-radius: 8px; background: #32353d; color: #fff; font: 600 16px Lato, sans-serif; letter-spacing: -.2px; padding: 0 12px 1px 11px; display: flex; align-items: center; }
.admin-ico { width: 15px; height: 16px; fill: #fff; margin-right: 3px; }
.caret { border: 4.500px solid transparent; border-top-color: #fff; border-bottom: 0; margin-left: auto; }
.heading { height: 76px; padding: 0 16px 0 24px; display: flex; justify-content: space-between; }
h1 { font-size: 40px; line-height: 48px; margin-top: 5px; letter-spacing: .75px; }
.date { font-size: 20px; line-height: 24px; margin-top: 20px; font-weight: 600; letter-spacing: -.42px; -webkit-text-stroke: .2px; }

.row { display: flex; align-items: flex-start; justify-content: space-between; }
.row-orders { margin-top: 20px; }
.card { background: #32353d; border: 1px solid #6d6e71; border-radius: 10px; box-shadow: 0 8px 16px rgba(0,0,0,.15); }
h2 { font-size: 45px; line-height: 54px; }
.t-map { letter-spacing: -.1px; }
.t-stats { letter-spacing: .4px; }
.t-chart { letter-spacing: .7px; }
.map-card { width: 1056px; height: 622px; padding: 30px 30px; }
.card-head { height: 80px; display: flex; justify-content: space-between; padding-left: 4px; }
.cars-active { font-size: 25px; line-height: 30px; margin-top: 20px; font-weight: 500; letter-spacing: -.35px; }
.map { position: relative; height: 480px; width: 994px; border-radius: 10px; overflow: hidden; box-shadow: 0 8px 16px rgba(0,0,0,.15); }
.map-svg { display: block; width: 994px; height: 480px; }
.map text { font-family: Roboto, sans-serif; paint-order: stroke; stroke: #f7f5f5; stroke-width: 2px; stroke-linejoin: round; }
.suburb text { font-size: 12.500px; fill: #4b4d6b; font-weight: 500; }
.town text { font-size: 14.500px; fill: #111; font-weight: 500; }
.town .city { font-size: 16.500px; }
.map .poi { font-size: 12.500px; fill: #a8743e; font-weight: 500; }
.road-name text { font-size: 11.500px; fill: #222; stroke: #b9c3d4; stroke-width: 1px; }
.shield path { stroke: #222; stroke-width: 1.200px; }
.shield path:not([fill]) { fill: #fff; }
.shield text { font-size: 9.500px; fill: #222; font-weight: 700; stroke: none; }
.map text.mapbox { font: 700 17px "Open Sans", sans-serif; fill: #fff; stroke: #9d9d9d; }
.attrib { position: absolute; right: 0; bottom: 0; width: 271px; height: 20px; background: rgba(255,255,255,.5); font: 12px/20px "Liberation Sans", Arial, sans-serif; color: #404040; padding: 0 5px 0 6px; display: flex; gap: 3px; white-space: nowrap; }
.attrib b { font-weight: 700; margin-left: auto; letter-spacing: -.05px; }

.stats-card { width: 516px; height: 610px; padding: 30px 30px; }
.stats-card h2 { padding-left: 4px; height: 78px; }
.stats { height: 471px; border: 1px solid #76777a; border-radius: 10px; background: #3a3c44; box-shadow: 0 8px 16px rgba(0,0,0,.15), inset 0 0 16px 8px #3c3c40; padding: 14px 16px 0; display: flex; flex-direction: column; gap: 48px; }
.stat { height: 57px; display: flex; justify-content: space-between; align-items: center; font-size: 34px; font-weight: 600; -webkit-text-stroke: .4px; }
.stat b { font-weight: 600; }
.s1 { letter-spacing: 0; }
.s2 { letter-spacing: .2px; }
.s3 { letter-spacing: .5px; }
.s4 { letter-spacing: .35px; }
.green { color: #a3f5c1; }
.orange { color: #ffb668; }

.chart-card { width: 921px; height: 400px; padding: 24px 28px; }
.preview-card { width: 651px; height: 400px; padding: 24px 32px 0 28px; display: flex; justify-content: space-between; align-items: flex-start; }
.view-all { width: 89px; height: 41px; margin-top: 11px; border: 1px solid #198754; border-radius: 8px; background: #309fba; color: #f8f9fa; font: 600 17px Lato, sans-serif; padding: 0 0 1px; white-space: nowrap; }
.scrollbar { width: 7px; height: 552px; margin-top: 1px; background: #808080; border-radius: 4px; flex: none; }
```
